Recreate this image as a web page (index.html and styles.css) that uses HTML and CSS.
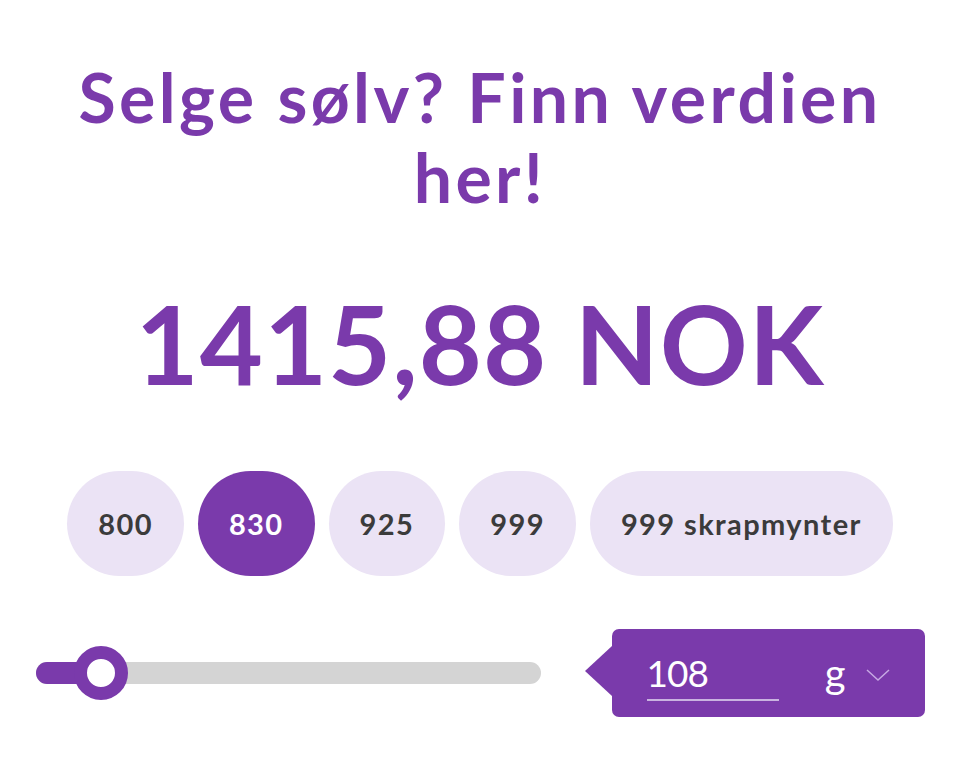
FILE: index.html
```html
<!DOCTYPE html>
<html lang="no">
<head>
    <meta charset="UTF-8">
    <meta name="viewport" content="width=device-width, initial-scale=1.0">
    <title>Sølvkalkulator</title>
    <link rel="stylesheet" href="styles.css">
</head>
<body>
    <div class="calculator">
        <h1 class="title">Selge sølv? Finn verdien her!</h1>

        <div class="price">1415,88 NOK</div>

        <div class="purity-list">
            <button class="purity">800</button>
            <button class="purity active">830</button>
            <button class="purity">925</button>
            <button class="purity">999</button>
            <button class="purity">999 skrapmynter</button>
        </div>

        <div class="weight-row">
            <div class="slider">
                <div class="slider-fill"></div>
                <div class="slider-thumb"></div>
            </div>
            <div class="weight-box">
                <div class="weight-value">108</div>
                <div class="weight-unit">
                    <span>g</span>
                    <svg class="chevron" width="24" height="14" viewBox="0 0 24 14">
                        <polyline points="1,2 12,12 23,2" fill="none" stroke="#c7a9e3" stroke-width="1.5"/>
                    </svg>
                </div>
            </div>
        </div>
    </div>
</body>
</html>
```

FILE: styles.css
```css
body {
    margin: 0;
    padding: 0;
    background-color: #fff;
    font-family: 'Lato', 'Noto Sans', sans-serif;
    color: #7a3aab;
}
.calculator {
    width: 889px;
    margin: 0 auto;
    padding-top: 57px;
}
.title {
    margin: 0 auto;
    width: 860px;
    font-size: 68px;
    line-height: 80px;
    font-weight: 700;
    letter-spacing: 3.4px;
    text-align: center;
}
.price {
    margin-top: 71px;
    font-size: 109px;
    line-height: 109px;
    font-weight: 700;
    letter-spacing: 1px;
    text-align: center;
}
.purity-list {
    display: flex;
    justify-content: center;
    gap: 14px;
    margin-top: 74px;
}
.purity {
    height: 105px;
    min-width: 116px;
    padding: 0 31px;
    border: none;
    border-radius: 53px;
    background-color: #ebe3f5;
    color: #3b3b3b;
    font-family: inherit;
    font-size: 29px;
    font-weight: 700;
    letter-spacing: 1.4px;
}
.purity.active {
    background-color: #7a3aab;
    color: #fff;
}
.weight-row {
    display: flex;
    align-items: center;
    justify-content: space-between;
    margin-top: 53px;
}
.slider {
    position: relative;
    width: 505px;
    height: 22px;
    border-radius: 11px;
    background-color: #d4d4d4;
}
.slider-fill {
    width: 70px;
    height: 100%;
    border-radius: 11px 0 0 11px;
    background-color: #7a3aab;
}
.slider-thumb {
    position: absolute;
    left: 38px;
    top: -16px;
    width: 28px;
    height: 28px;
    border: 13px solid #7a3aab;
    border-radius: 50%;
    background-color: #fff;
}
.weight-box {
    position: relative;
    display: flex;
    align-items: center;
    justify-content: space-between;
    width: 313px;
    height: 88px;
    box-sizing: border-box;
    padding: 0 35px 0 35px;
    border-radius: 7px;
    background-color: #7a3aab;
    color: #fff;
}
.weight-box::before {
    content: "";
    position: absolute;
    left: -27px;
    top: 17px;
    border-top: 25px solid transparent;
    border-bottom: 25px solid transparent;
    border-right: 27px solid #7a3aab;
}
.weight-value {
    width: 132px;
    margin-top: 6px;
    padding-bottom: 4px;
    border-bottom: 2px solid #c9b3e0;
    font-size: 37px;
    line-height: 44px;
    font-weight: 400;
    letter-spacing: -1px;
}
.weight-unit {
    display: flex;
    align-items: center;
    gap: 20px;
    font-size: 40px;
    line-height: 44px;
}
.chevron {
    margin-top: 4px;
}
```
